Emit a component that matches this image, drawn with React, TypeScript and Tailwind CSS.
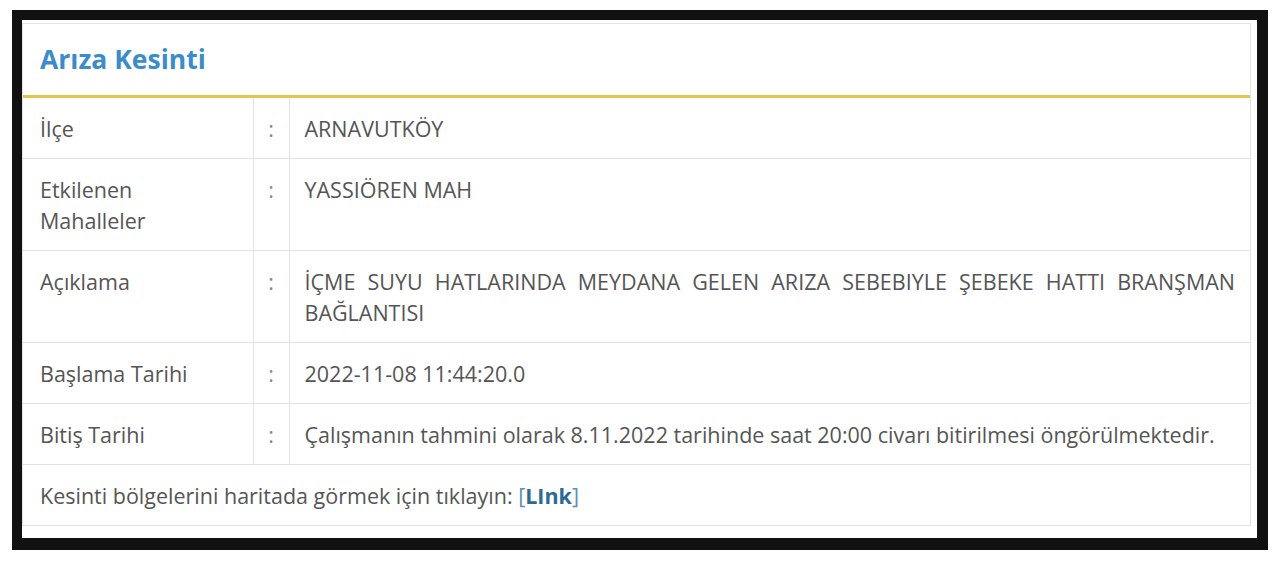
export default function App() {
  const rows: { label: string; value: string; justify?: boolean }[] = [
    { label: 'İlçe', value: 'ARNAVUTKÖY' },
    { label: 'Etkilenen Mahalleler', value: 'YASSIÖREN MAH' },
    {
      label: 'Açıklama',
      value:
        'İÇME SUYU HATLARINDA MEYDANA GELEN ARIZA SEBEBIYLE ŞEBEKE HATTI BRANŞMAN BAĞLANTISI',
      justify: true,
    },
    { label: 'Başlama Tarihi', value: '2022-11-08 11:44:20.0' },
    {
      label: 'Bitiş Tarihi',
      value:
        'Çalışmanın tahmini olarak 8.11.2022 tarihinde saat 20:00 civarı bitirilmesi öngörülmektedir.',
    },
  ];

  return (
    <div className="min-h-screen bg-white pt-[10px] pl-[12px] font-['Open_Sans',sans-serif]">
      <div className="w-[1256px] h-[540px] border-[#111] border-t-[10px] border-l-[10px] border-r-[11px] border-b-[12px] bg-white">
        <div className="mt-[3px] w-[1229px] border border-[#e3e3e3] bg-white">
          <div className="h-[74px] border-b-[3px] border-[#e6c34a] pl-[17px] flex items-center">
            <h1 className="text-[26.5px] font-bold text-[#3b8ccb]">Arıza Kesinti</h1>
          </div>
          <table className="w-full border-collapse text-[21.5px] leading-[31px] text-[#555]">
            <colgroup>
              <col className="w-[230px]" />
              <col className="w-[36px]" />
              <col />
            </colgroup>
            <tbody>
              {rows.map((r) => (
                <tr key={r.label} className="border-b border-[#e3e3e3] align-top">
                  <td className="border-r border-[#e3e3e3] px-[17px] pt-[15px] pb-[14px]">{r.label}</td>
                  <td className="border-r border-[#e3e3e3] text-center pt-[15px] pb-[14px] text-[#888]">:</td>
                  <td className={`px-[15px] pt-[15px] pb-[14px] ${r.justify ? 'text-justify' : ''}`}>{r.value}</td>
                </tr>
              ))}
              <tr>
                <td colSpan={3} className="px-[17px] pt-[15px] pb-[14px]">
                  Kesinti bölgelerini haritada görmek için tıklayın:{' '}
                  <span className="text-[#5b8fb3]">[</span>
                  <span className="font-bold text-[#2c6a94]">LInk</span>
                  <span className="text-[#5b8fb3]">]</span>
                </td>
              </tr>
            </tbody>
          </table>
        </div>
      </div>
    </div>
  );
}
